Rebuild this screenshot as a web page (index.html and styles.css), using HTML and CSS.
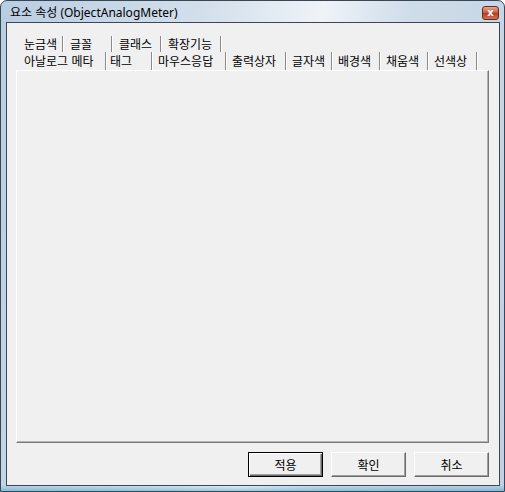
FILE: index.html
```html
<!DOCTYPE html>
<html lang="ko">
<head>
    <meta charset="UTF-8">
    <title>요소 속성</title>
    <link rel="stylesheet" href="styles.css">
</head>
<body>
    <div class="window">
        <div class="titlebar">
            <span class="title">요소 속성 (ObjectAnalogMeter)</span>
            <button class="close">x</button>
        </div>
        <div class="client">
            <div class="tab-row row-1">
                <div class="tab">눈금색</div>
                <div class="tab">글꼴</div>
                <div class="tab">클래스</div>
                <div class="tab">확장기능</div>
            </div>
            <div class="tab-row row-2">
                <div class="tab">아날로그 메타</div>
                <div class="tab short">태그</div>
                <div class="tab">마우스응답</div>
                <div class="tab">출력상자</div>
                <div class="tab">글자색</div>
                <div class="tab">배경색</div>
                <div class="tab">채움색</div>
                <div class="tab">선색상</div>
            </div>
            <div class="pane"></div>
            <div class="btn-group">
                <button class="btn default">적용</button>
                <button class="btn">확인</button>
                <button class="btn">취소</button>
            </div>
        </div>
    </div>
</body>
</html>
```

FILE: styles.css
```css
body {
    margin: 0;
    font-family: "Noto Sans CJK KR", "Noto Sans", sans-serif;
    font-size: 12px;
    color: #000;
}
.window {
    width: 505px;
    height: 492px;
    box-sizing: border-box;
    border: 1px solid #3a4654;
    border-radius: 7px 7px 0 0;
    padding: 0 4px 5px 5px;
    display: flex;
    flex-direction: column;
    background:
        linear-gradient(to top, rgba(70, 170, 210, 0.55), rgba(70, 170, 210, 0) 6px),
        linear-gradient(100deg, #b9cde2 0%, #d3dfeb 35%, #eef3f8 55%, #cfdce9 70%, #bfd1e4 100%);
}
.titlebar {
    height: 21px;
    display: flex;
    align-items: center;
    justify-content: space-between;
}
.title {
    font-family: "Noto Sans", "Noto Sans CJK KR", sans-serif;
    font-size: 12px;
    line-height: 14px;
    padding-left: 4px;
    padding-top: 2px;
}
.close {
    width: 17px;
    height: 14px;
    margin-top: 2px;
    margin-right: 1px;
    padding: 0;
    border: 1px solid #6b2a1e;
    border-radius: 3px;
    background: linear-gradient(#e8a58f, #c8553b 50%, #b53a20 51%, #d2744f);
    color: #fff;
    font-family: "DejaVu Sans", sans-serif;
    font-size: 10px;
    font-weight: bold;
    line-height: 10px;
}
.client {
    flex: 1;
    display: flex;
    flex-direction: column;
    background: #f0f0f0;
    border: 1px solid #3d4652;
    padding: 13px 10px 8px 9px;
}
.tab-row {
    display: grid;
}
.row-1 {
    height: 16px;
    grid-template-columns: 47px 49px 49px 60px;
}
.row-2 {
    height: 18px;
    grid-template-columns: 90px 46px 74px 60px 46px 48px 48px 49px;
}
.tab {
    border-right: 1px solid #8a8a8a;
    box-shadow: 1px 0 0 #fff;
    padding-left: 7px;
    line-height: 15px;
    white-space: nowrap;
}
.tab:first-child {
    padding-left: 8px;
}
.row-2 .tab {
    line-height: 17px;
    padding-left: 6px;
}
.row-2 .tab:first-child {
    padding-left: 8px;
}
.row-2 .short {
    padding-left: 4px;
}
.pane {
    flex: 1;
    border-left: 1px solid #fff;
    border-top: 1px solid #fff;
    border-right: 1px solid #7a7a7a;
    border-bottom: 1px solid #7a7a7a;
    box-shadow: inset -1px -1px 0 #b4b4b4;
}
.btn-group {
    display: flex;
    justify-content: flex-end;
    gap: 8px;
    margin-top: 9px;
}
.btn {
    width: 75px;
    height: 25px;
    padding: 0;
    background: #f0f0f0;
    border: 1px solid;
    border-color: #fff #696969 #696969 #fff;
    box-shadow: inset -1px -1px 0 #a0a0a0;
    font-family: "Noto Sans CJK KR", sans-serif;
    font-size: 12px;
    color: #000;
}
.btn.default {
    border: 1px solid #000;
    box-shadow: inset 1px 1px 0 #fff, inset -1px -1px 0 #696969, inset -2px -2px 0 #a0a0a0;
}
```
